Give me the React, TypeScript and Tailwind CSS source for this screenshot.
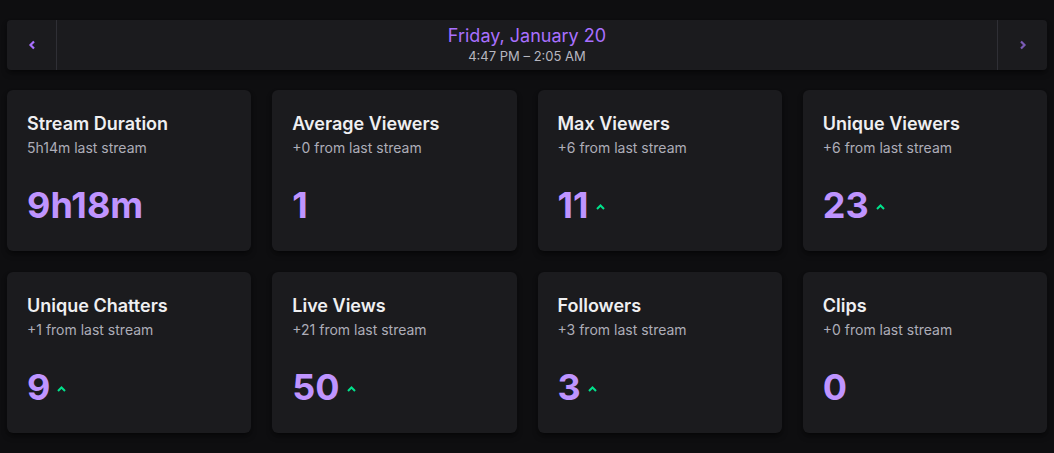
const stats = [
  { title: "Stream Duration", sub: "5h14m last stream", value: "9h18m", up: false },
  { title: "Average Viewers", sub: "+0 from last stream", value: "1", up: false },
  { title: "Max Viewers", sub: "+6 from last stream", value: "11", up: true },
  { title: "Unique Viewers", sub: "+6 from last stream", value: "23", up: true },
  { title: "Unique Chatters", sub: "+1 from last stream", value: "9", up: true },
  { title: "Live Views", sub: "+21 from last stream", value: "50", up: true },
  { title: "Followers", sub: "+3 from last stream", value: "3", up: true },
  { title: "Clips", sub: "+0 from last stream", value: "0", up: false },
];

function Caret() {
  return (
    <svg width="9" height="6" viewBox="0 0 9 6" className="mt-1 text-[#00e38c]">
      <path d="M1 5 L4.5 1.5 L8 5" fill="none" stroke="currentColor" strokeWidth="2" />
    </svg>
  );
}

export default function App() {
  return (
    <div
      className="min-h-screen bg-[#0e0e10] px-[7px] py-5 text-white"
      style={{ fontFamily: "Inter, 'Noto Sans', sans-serif" }}
    >
      <div className="flex h-[50px] items-stretch rounded-sm bg-[#1b1b1e] shadow-md shadow-black/40">
        <button className="flex w-[50px] items-center justify-center border-r border-[#2f2f35] text-[#a970ff]">
          <svg width="8" height="10" viewBox="0 0 8 10">
            <path d="M6 1.5 L2.5 5 L6 8.5" fill="none" stroke="currentColor" strokeWidth="2.2" />
          </svg>
        </button>
        <div className="flex flex-1 flex-col items-center justify-center pb-[3px]">
          <div className="text-lg leading-6 text-[#a970ff]">Friday, January 20</div>
          <div className="text-[13px] leading-4 text-[#b7b7c0]">4:47 PM – 2:05 AM</div>
        </div>
        <button className="flex w-[50px] items-center justify-center border-l border-[#2f2f35] text-[#7a5bb5]">
          <svg width="8" height="10" viewBox="0 0 8 10">
            <path d="M2 1.5 L5.5 5 L2 8.5" fill="none" stroke="currentColor" strokeWidth="2.2" />
          </svg>
        </button>
      </div>

      <div className="mt-5 grid grid-cols-4 gap-x-[21px] gap-y-[21px]">
        {stats.map((s) => (
          <div
            key={s.title}
            className="h-[161px] rounded-md bg-[#1b1b1e] px-5 pt-5 shadow-md shadow-black/40"
          >
            <div className="text-lg font-semibold leading-7 text-[#efeff1]">{s.title}</div>
            <div className="text-sm leading-5 text-[#adadb8]">{s.sub}</div>
            <div className="mt-[27px] flex items-center gap-[7px]">
              <span className="text-4xl font-bold leading-10 text-[#bf94ff]">{s.value}</span>
              {s.up && <Caret />}
            </div>
          </div>
        ))}
      </div>
    </div>
  );
}
